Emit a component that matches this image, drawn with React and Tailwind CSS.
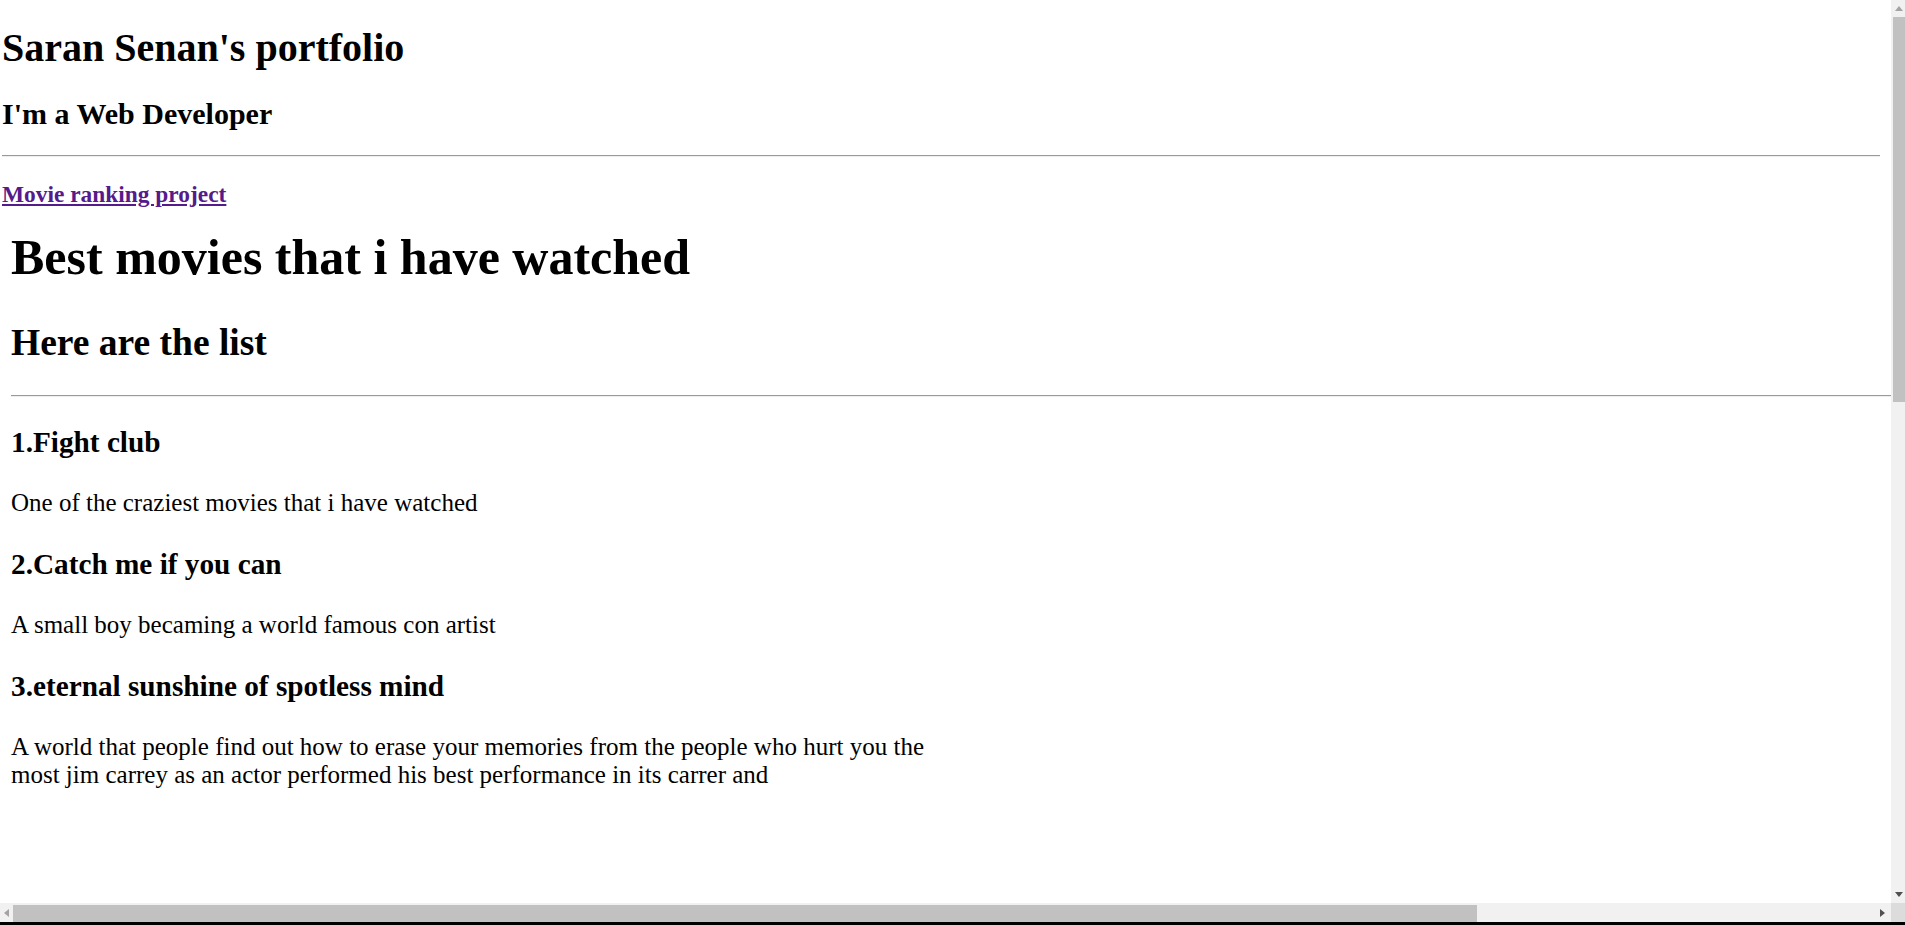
import React from "react";

const movies = [
  { title: "1.Fight club", note: "One of the craziest movies that i have watched" },
  { title: "2.Catch me if you can", note: "A small boy becaming a world famous con artist" },
  {
    title: "3.eternal sunshine of spotless mind",
    note: "A world that people find out how to erase your memories from the people who hurt you the most jim carrey as an actor performed his best performance in its carrer and",
  },
];

function Hr({ className }) {
  return <div className={"h-[2px] border-t border-t-[#9a9a9a] border-b border-b-[#eeeeee] " + className} />;
}

export default function App() {
  return (
    <div className="w-[1905px] h-[925px] flex flex-col bg-black overflow-hidden font-['Liberation_Serif','Times_New_Roman',serif] text-black">
      <div className="flex h-[903px]">
        {/* page */}
        <main className="w-[1891px] h-full bg-white overflow-hidden flex flex-col">
          <section className="w-[1880px] pl-[2px] pt-[25px] flex flex-col">
            <h1 className="text-[40px] leading-[46px] font-bold">Saran Senan's portfolio</h1>
            <h2 className="mt-[26px] text-[30px] leading-[34px] font-bold">I'm a Web Developer</h2>
            <Hr className="mt-[24px]" />
            <a href="#" className="mt-[24px] self-start text-[23.4px] leading-[27px] font-bold underline text-[#551a8b]">
              Movie ranking project
            </a>
          </section>

          {/* movie ranking */}
          <section className="w-[1891px] pl-[11px] flex flex-col">
            <h1 className="mt-[22px] text-[50px] leading-[55px] font-bold">Best movies that i have watched</h1>
            <h2 className="mt-[37px] text-[37.5px] leading-[41px] font-bold">Here are the list</h2>
            <Hr className="mt-[32px]" />
            <div className="mt-[29px] flex flex-col gap-[31px]">
              {movies.map((m) => (
                <React.Fragment key={m.title}>
                  <h3 className="text-[29.25px] leading-[32px] font-bold">{m.title}</h3>
                  <p className="w-[940px] text-[25px] leading-[28px]">{m.note}</p>
                </React.Fragment>
              ))}
            </div>
          </section>
        </main>

        {/* vertical scrollbar */}
        <div className="w-[14px] h-full bg-[#f1f1f1] flex flex-col">
          <div className="h-[17px] flex items-center justify-center pl-[2px]">
            <svg width="8" height="5" viewBox="0 0 8 5"><path d="M4 0L8 5H0Z" fill="#a3a3a3" /></svg>
          </div>
          <div className="ml-[2px] h-[385px] bg-[#c1c1c1]" />
          <div className="flex-1" />
          <div className="h-[17px] flex items-center justify-center pl-[2px]">
            <svg width="8" height="5" viewBox="0 0 8 5"><path d="M0 0H8L4 5Z" fill="#505050" /></svg>
          </div>
        </div>
      </div>

      {/* horizontal scrollbar */}
      <div className="h-[19px] flex bg-[#f1f1f1]">
        <div className="w-[13px] flex items-center justify-center">
          <svg width="5" height="8" viewBox="0 0 5 8"><path d="M5 0V8L0 4Z" fill="#a3a3a3" /></svg>
        </div>
        <div className="mt-[2px] w-[1464px] bg-[#c1c1c1]" />
        <div className="flex-1" />
        <div className="w-[17px] flex items-center justify-center">
          <svg width="5" height="8" viewBox="0 0 5 8"><path d="M0 0L5 4L0 8Z" fill="#505050" /></svg>
        </div>
        <div className="w-[14px] bg-[#dcdcdc]" />
      </div>
    </div>
  );
}
